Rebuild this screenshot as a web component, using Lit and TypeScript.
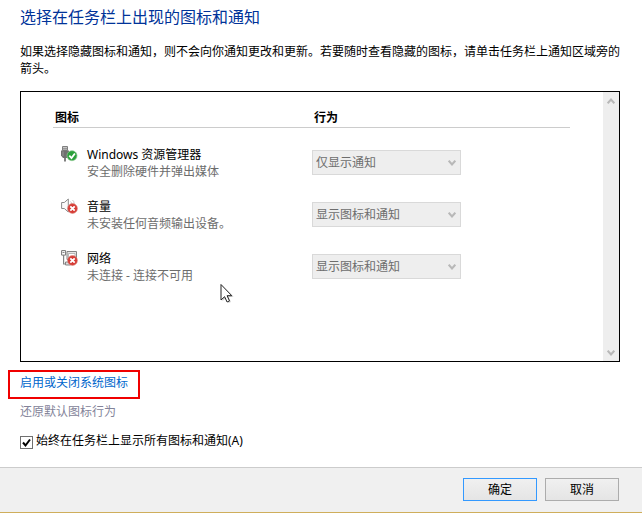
import { LitElement, html, svg, css } from "lit";
import { customElement, state } from "lit/decorators.js";

interface IconRow {
  id: string;
  name: string;
  detail: string;
  behavior: string;
}

const ROWS: IconRow[] = [
  { id: "usb", name: "Windows 资源管理器", detail: "安全删除硬件并弹出媒体", behavior: "仅显示通知" },
  { id: "volume", name: "音量", detail: "未安装任何音频输出设备。", behavior: "显示图标和通知" },
  { id: "network", name: "网络", detail: "未连接 - 连接不可用", behavior: "显示图标和通知" },
];

const errorBadge = svg`
  <circle cx="11.5" cy="10.5" r="4.9" fill="#d63a34" stroke="#dc8a80" stroke-width=".6"/>
  <path d="M9.300 8.300l4.400 4.400M13.700 8.300l-4.400 4.400" stroke="#fff" stroke-width="1.8"/>`;

const GLYPHS: Record<string, unknown> = {
  usb: svg`
    <path d="M1.500 .5h5v4h-5z" fill="#c8c8c8" stroke="#808080"/>
    <path d="M2.500 2h1v1.500h-1zM4.500 2h1v1.500h-1z" fill="#666"/>
    <path d="M0 4.500h8v5L6 12H2L0 9.500z" fill="#707070"/>
    <path d="M2 5.500v4.500" stroke="#969696"/>
    <path d="M4 12v3.500" stroke="#808080" stroke-width="2"/>
    <circle cx="11" cy="9.700" r="5" fill="#2aa03a" stroke="#8fc894" stroke-width=".7"/>
    <path d="M8.300 9.700l2.200 2.400 3.400-4.600" fill="none" stroke="#fff" stroke-width="1.8"/>`,
  volume: svg`
    <path d="M.6 4.500h2.700L7.300 1v13L3.300 10.500H.6z" fill="#fafafa" stroke="#8a8a8a"/>
    <path d="M9.500 3.500q1.200 1 1.200 2.500M11.500 2q1.700 1.500 1.700 3.500" fill="none" stroke="#bbb" stroke-width=".8"/>
    ${errorBadge}`,
  network: svg`
    <path d="M6 1.500h9.500v8H6z" fill="#e6e6e6" stroke="#858585"/>
    <path d="M7.500 3.500h6.500v4.500H7.500z" fill="#fff" stroke="#aaa" stroke-width=".8"/>
    <path d="M4.500 12h5v3h-5z" fill="#ddd" stroke="#858585"/>
    <path d="M.6 .6h4v4.500h-4z" fill="#fff" stroke="#777"/>
    <path d="M1.500 2.500h2" stroke="#888"/>
    <path d="M2.600 5v9h2" fill="none" stroke="#858585" stroke-width="1.200"/>
    ${errorBadge}`,
};

const chevron = (d: string) => html`
  <svg class="chevron" width="8" height="6" viewBox="0 0 8 6" aria-hidden="true">
    <path d=${d} fill="none" stroke="#b8b8b8" stroke-width="2"></path>
  </svg>`;
const DOWN = "M.7 .7L4 4.500 7.300 .7";
const UP = "M.7 5.300L4 1.500 7.300 5.300";

@customElement("notification-table")
export class NotificationTable extends LitElement {
  static styles = css`
    :host {
      display: block;
    }
    .table {
      width: 100%;
      table-layout: fixed;
      border-collapse: separate;
      border-spacing: 0;
    }
    .head {
      padding: 0 0 0 2px;
      line-height: 18px;
      text-align: left;
      border-bottom: 1px solid #ccc;
    }
    .icon-col {
      width: 34px;
    }
    .behavior-col {
      width: 258px;
    }
    .cell {
      padding: 18px 0 0;
      vertical-align: top;
      line-height: 17px;
    }
    .icon {
      display: block;
      margin-left: 8px;
    }
    .detail {
      color: #6d6d6d;
    }
    .picker {
      display: grid;
      align-items: center;
      width: 149px;
      margin-top: 4px;
    }
    .select,
    .chevron {
      grid-area: 1 / 1;
    }
    .select {
      appearance: none;
      box-sizing: border-box;
      width: 100%;
      height: 25px;
      padding: 0 3px;
      border: 1px solid #d9d9d9;
      border-radius: 0;
      background: #eee;
      color: #6d6d6d;
      font: inherit;
      opacity: 1;
    }
    .chevron {
      justify-self: end;
      margin-right: 5px;
      pointer-events: none;
    }
  `;

  render() {
    return html`
      <table class="table">
        <colgroup>
          <col class="icon-col" />
          <col />
          <col class="behavior-col" />
        </colgroup>
        <thead>
          <tr>
            <th class="head" colspan="2" scope="col">图标</th>
            <th class="head" scope="col">行为</th>
          </tr>
        </thead>
        <tbody>
          ${ROWS.map(
            (row) => html`
              <tr>
                <td class="cell">
                  <svg class="icon" width="17" height="17" viewBox="0 0 17 17" aria-hidden="true">
                    ${GLYPHS[row.id]}
                  </svg>
                </td>
                <td class="cell">
                  <label for=${row.id}>${row.name}</label>
                  <div class="detail">${row.detail}</div>
                </td>
                <td class="cell">
                  <div class="picker">
                    <select class="select" id=${row.id} disabled>
                      <option>${row.behavior}</option>
                    </select>
                    ${chevron(DOWN)}
                  </div>
                </td>
              </tr>
            `
          )}
        </tbody>
      </table>
    `;
  }
}

@customElement("app-root")
export class AppRoot extends LitElement {
  @state() private showAll = true;

  static styles = css`
    :host {
      display: flex;
      flex-direction: column;
      position: relative;
      box-sizing: border-box;
      min-height: 100vh;
      background: #fff;
      color: #000;
      font: 12px/17px "Noto Sans", "Noto Sans CJK SC", sans-serif;
    }
    .main {
      flex: 1;
      display: flex;
      flex-direction: column;
      align-items: flex-start;
      padding: 7px 22px 17px 20px;
    }
    .title {
      margin: 0;
      font-size: 16px;
      line-height: 20px;
      font-weight: 400;
      color: #003399;
    }
    .intro {
      margin: 15px 0;
      font-family: "Noto Sans CJK SC", sans-serif;
    }
    .list {
      flex: 1;
      align-self: stretch;
      display: flex;
      border: 1px solid #000;
    }
    .rows {
      flex: 1;
      padding: 17px 33px 17px 32px;
    }
    .scrollbar {
      display: flex;
      flex-direction: column;
      justify-content: space-between;
      width: 16px;
      background: #eee;
    }
    .arrow {
      display: grid;
      place-items: center;
      width: 16px;
      height: 17px;
      padding: 0;
      border: 0;
      background: none;
    }
    .link {
      color: #0066cc;
      text-decoration: none;
    }
    .marked {
      margin: 8px 0 4px -12px;
      padding: 2px 10px 6px;
      border: 2px solid #f00000;
    }
    .muted {
      color: #838399;
    }
    .option {
      display: flex;
      align-items: flex-end;
      gap: 3px;
      margin-top: 12px;
    }
    .tick {
      display: grid;
      width: 13px;
      height: 13px;
    }
    .box,
    .mark {
      grid-area: 1 / 1;
    }
    .box {
      appearance: none;
      box-sizing: border-box;
      width: 13px;
      height: 13px;
      margin: 0;
      border: 1px solid #707070;
      background: #fff;
    }
    .mark {
      pointer-events: none;
    }
    .footer {
      display: flex;
      justify-content: flex-end;
      gap: 8px;
      padding: 10px 23px 11px;
      border-top: 1px solid #ccc;
      border-bottom: 1px solid #cfae5c;
      background: #f0f0f0;
    }
    .main {
      padding-bottom: 18px;
    }
    .button {
      width: 74px;
      height: 23px;
      padding: 0;
      border: 1px solid #acacac;
      background: linear-gradient(#f0f0f0, #e5e5e5);
      color: #000;
      font: inherit;
    }
    .primary {
      border-color: #3399ff;
    }
    .pointer {
      position: absolute;
      left: 220px;
      top: 283px;
      pointer-events: none;
    }
  `;

  private toggle(e: Event) {
    this.showAll = (e.target as HTMLInputElement).checked;
  }

  render() {
    return html`
      <main class="main">
        <h1 class="title">选择在任务栏上出现的图标和通知</h1>
        <p class="intro">如果选择隐藏图标和通知\uff0c则不会向你通知更改和更新。若要随时查看隐藏的图标\uff0c请单击任务栏上通知区域旁的箭头。</p>
        <section class="list">
          <notification-table class="rows"></notification-table>
          <div class="scrollbar">
            <button class="arrow" disabled aria-label="向上滚动">${chevron(UP)}</button>
            <button class="arrow" disabled aria-label="向下滚动">${chevron(DOWN)}</button>
          </div>
        </section>
        <a class="link marked" href="#system">启用或关闭系统图标</a>
        <a class="link muted" href="#restore">还原默认图标行为</a>
        <label class="option">
          <span class="tick">
            <input class="box" type="checkbox" .checked=${this.showAll} @change=${this.toggle} />
            ${this.showAll
              ? html`<svg class="mark" width="13" height="13" viewBox="0 0 13 13" aria-hidden="true">
                  <path d="M3 6.500l2.500 3L10 3.500" fill="none" stroke="#000" stroke-width="2"></path>
                </svg>`
              : ""}
          </span>
          始终在任务栏上显示所有图标和通知(A)
        </label>
      </main>
      <footer class="footer">
        <button class="button primary">确定</button>
        <button class="button">取消</button>
      </footer>
      <svg class="pointer" width="16" height="22" viewBox="0 0 16 22" aria-hidden="true">
        <path d="M2.500 3v15l3.500-3 2.500 5 2.500-1-2.300-5h5z" fill="#000" opacity=".18"></path>
        <path d="M1 1.500v15.500l3.600-3.300 2.500 5.300 2.400-1.100-2.400-5.200h4.700z" fill="#fff" stroke="#222"></path>
      </svg>
    `;
  }
}
